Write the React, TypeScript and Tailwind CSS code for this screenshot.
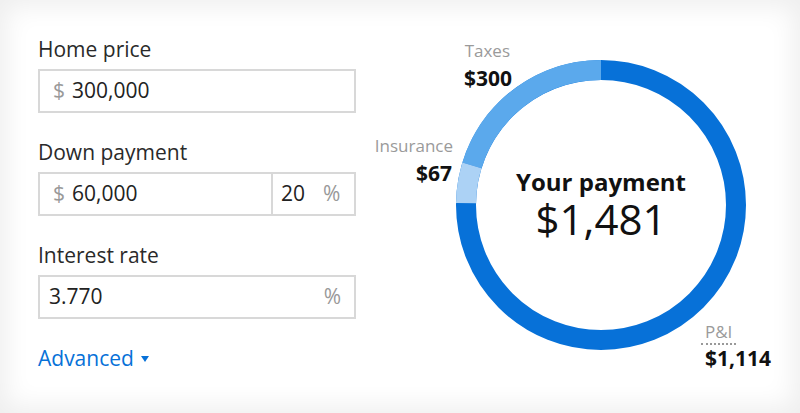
import React from "react";

const CX = 145;
const CY = 145;
const R = 135;

function pt(deg: number) {
  const a = (deg * Math.PI) / 180;
  return [CX + R * Math.cos(a), CY + R * Math.sin(a)];
}

function arc(start: number, end: number) {
  const [x1, y1] = pt(start);
  const [x2, y2] = pt(end);
  const large = end - start > 180 ? 1 : 0;
  return `M ${x1} ${y1} A ${R} ${R} 0 ${large} 1 ${x2} ${y2}`;
}

function Donut() {
  const total = 1481;
  const taxesDeg = (300 / total) * 360;
  const insDeg = (67 / total) * 360;
  const taxStart = 270 - taxesDeg;
  const insStart = taxStart - insDeg;
  return (
    <svg width="290" height="290" viewBox="0 0 290 290">
      <circle cx={CX} cy={CY} r={R} fill="none" stroke="#0771d8" strokeWidth="20" />
      <path d={arc(taxStart, 270)} fill="none" stroke="#5ba9ec" strokeWidth="20" />
      <path d={arc(insStart, taxStart)} fill="none" stroke="#acd2f5" strokeWidth="20" />
    </svg>
  );
}

function Field({ label, children }: { label: string; children: React.ReactNode }) {
  return (
    <div className="flex flex-col">
      <div className="h-[28px] leading-[28px] text-[21px] text-[#2a2a2a] mb-[6px]">{label}</div>
      {children}
    </div>
  );
}

export default function App() {
  return (
    <div
      className="w-[800px] h-[413px] bg-white flex overflow-hidden shadow-[inset_0_0_26px_6px_rgba(0,0,0,0.07)]"
      style={{ fontFamily: '"Open Sans", "Noto Sans", sans-serif' }}
    >
      <div className="w-[356px] shrink-0 pl-[38px] pt-[35px] flex flex-col gap-[25px]">
        <Field label="Home price">
          <div className="h-[44px] border-2 border-[#d8d8d8] bg-white flex items-center pl-[13px] text-[21px]">
            <span className="text-[#999999]">$</span>
            <span className="ml-[7px] text-[#222222]">300,000</span>
          </div>
        </Field>
        <Field label="Down payment">
          <div className="h-[44px] border-2 border-[#d8d8d8] bg-white flex text-[21px]">
            <div className="flex-1 flex items-center pl-[13px] border-r-2 border-[#d8d8d8]">
              <span className="text-[#999999]">$</span>
              <span className="ml-[7px] text-[#222222]">60,000</span>
            </div>
            <div className="w-[81px] flex items-center pl-[8px]">
              <span className="text-[#222222]">20</span>
              <span className="ml-[18px] text-[#999999]">%</span>
            </div>
          </div>
        </Field>
        <Field label="Interest rate">
          <div className="h-[44px] border-2 border-[#d8d8d8] bg-white flex items-center justify-between pl-[9px] pr-[13px] text-[21px]">
            <span className="text-[#222222]">3.770</span>
            <span className="text-[#999999]">%</span>
          </div>
        </Field>
        <div className="h-[28px] leading-[28px] text-[21px] text-[#0771d8] flex items-center">
          <span>Advanced</span>
          <svg width="8" height="7" viewBox="0 0 8 7" className="ml-[7px] mt-[3px]">
            <path d="M0 0 L8 0 L4 6 Z" fill="#0771d8" />
          </svg>
        </div>
      </div>

      <div className="relative flex-1 h-full">
        <div className="absolute left-[100px] top-[60px]">
          <Donut />
        </div>
        <div className="absolute left-[100px] top-[170px] w-[290px] flex flex-col items-center">
          <div className="text-[24px] leading-none font-bold text-[#111111]">Your payment</div>
          <div className="mt-[4px] text-[42px] leading-none text-[#111111]">$1,481</div>
        </div>

        <div className="absolute right-[290px] top-[42px] text-[17px] leading-none text-[#9a9a9a] text-right">Taxes</div>
        <div className="absolute right-[288px] top-[68px] text-[21px] leading-none font-bold text-[#111111] text-right">$300</div>
        <div className="absolute right-[347px] top-[137px] text-[17px] leading-none text-[#9a9a9a] text-right">Insurance</div>
        <div className="absolute right-[348px] top-[163px] text-[21px] leading-none font-bold text-[#111111] text-right">$67</div>

        <div className="absolute left-[345px] top-[323px] text-[17px] leading-none text-[#9a9a9a] px-[4px] pb-[3px] border-b-2 border-dotted border-[#999999]">P&amp;I</div>
        <div className="absolute left-[349px] top-[348px] text-[21px] leading-none font-bold text-[#111111]">$1,114</div>
      </div>
    </div>
  );
}
